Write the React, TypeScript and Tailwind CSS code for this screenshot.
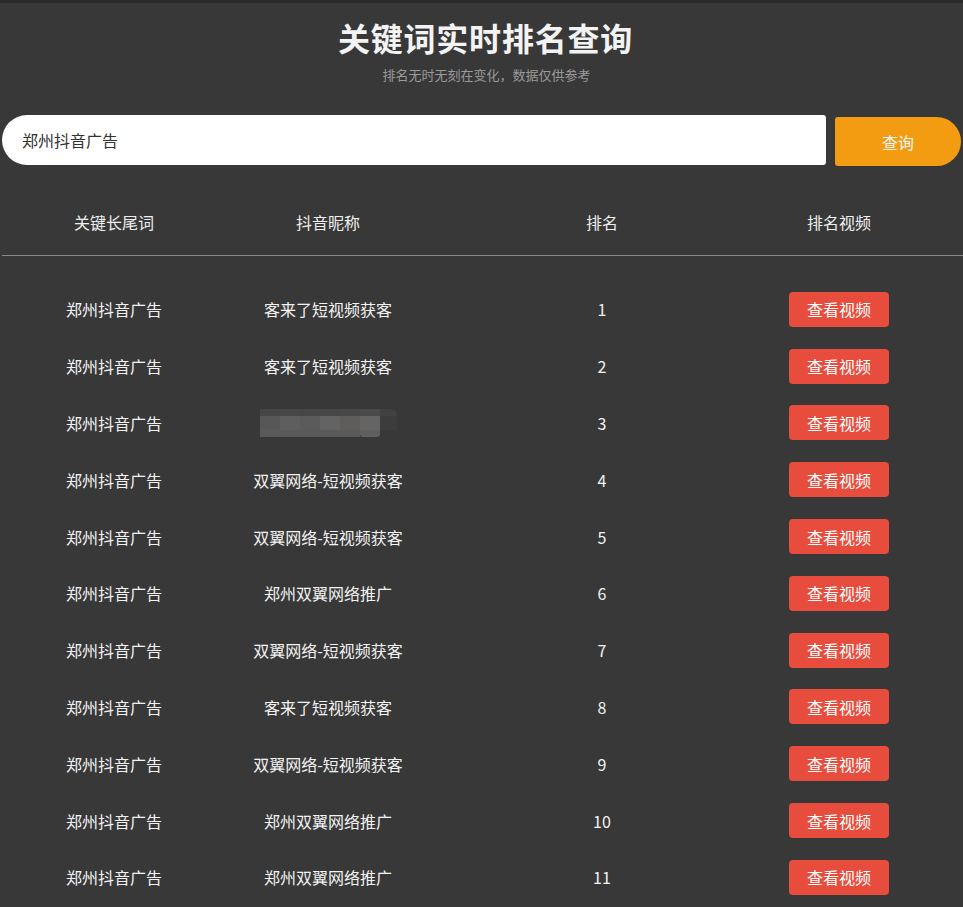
import React from "react";

const rows: { nick: string | null; rank: number }[] = [
  { nick: "客来了短视频获客", rank: 1 },
  { nick: "客来了短视频获客", rank: 2 },
  { nick: null, rank: 3 },
  { nick: "双翼网络-短视频获客", rank: 4 },
  { nick: "双翼网络-短视频获客", rank: 5 },
  { nick: "郑州双翼网络推广", rank: 6 },
  { nick: "双翼网络-短视频获客", rank: 7 },
  { nick: "客来了短视频获客", rank: 8 },
  { nick: "双翼网络-短视频获客", rank: 9 },
  { nick: "郑州双翼网络推广", rank: 10 },
  { nick: "郑州双翼网络推广", rank: 11 },
];

function Blurred() {
  return (
    <div className="flex flex-col w-[137px] h-[28px] blur-[0.6px]">
      <div className="flex h-[7px]">
        <div className="w-[20px] bg-[#454545]" />
        <div className="w-[20px] bg-[#474747]" />
        <div className="w-[20px] bg-[#464646]" />
        <div className="w-[20px] bg-[#474747]" />
        <div className="w-[20px] bg-[#484848]" />
        <div className="w-[20px] bg-[#4a4a4a]" />
        <div className="w-[17px] bg-[#414141] rounded-tr-[6px]" />
      </div>
      <div className="flex h-[14px]">
        <div className="w-[20px] bg-[#575757]" />
        <div className="w-[20px] bg-[#5e5e5e]" />
        <div className="w-[20px] bg-[#5b5b5b]" />
        <div className="w-[20px] bg-[#636363]" />
        <div className="w-[20px] bg-[#5f5c5c]" />
        <div className="w-[20px] bg-[#636463]" />
        <div className="w-[17px] bg-[#3c3c3c]" />
      </div>
      <div className="flex h-[7px]">
        <div className="w-[100px] bg-[#5a5a5a]" />
        <div className="w-[20px] bg-[#5f5f5f] rounded-b-[3px]" />
      </div>
    </div>
  );
}

export default function App() {
  return (
    <div
      className="min-h-screen bg-[#383838] border-t-[3px] border-[#2a2a2a] text-[#f2f2f2]"
      style={{ fontFamily: '"Noto Sans CJK SC", "Noto Sans", sans-serif' }}
    >
      <h1 className="mt-[15px] text-center text-[32px] leading-[38px] font-bold tracking-[0.8px] pl-[8px] text-[#f3f3f3]">
        关键词实时排名查询
      </h1>
      <p className="mt-[10px] text-center text-[13px] leading-[18px] pl-[10px] text-[#9a9a9a]">
        排名无时无刻在变化，数据仅供参考
      </p>

      <div className="mt-[30px] flex items-center pl-[2px] pr-[2px]">
        <div className="w-[824px] h-[50px] bg-white rounded-l-[25px] rounded-r-[3px] flex items-center pl-[20px] text-[16px] text-[#333]">
          郑州抖音广告
        </div>
        <button className="ml-[9px] w-[126px] h-[49px] mt-[3px] bg-[#f39c12] rounded-l-[3px] rounded-r-[25px] text-[16px] text-[#f5f5f5]">
          查询
        </button>
      </div>

      <div className="mt-[23px] grid grid-cols-[228px_200px_348px_126px] h-[66px] items-center text-center text-[16px] text-[#efefef]">
        <div>关键长尾词</div>
        <div>抖音昵称</div>
        <div>排名</div>
        <div>排名视频</div>
      </div>
      <div className="ml-[2px] h-px bg-[#8a8a8a]" />

      <div className="pt-[25px]">
        {rows.map((r) => (
          <div
            key={r.rank}
            className="grid grid-cols-[228px_200px_348px_126px] h-[56.8px] items-center text-center text-[16px] text-[#f2f2f2]"
          >
            <div>郑州抖音广告</div>
            <div className="flex justify-center">
              {r.nick ? <span>{r.nick}</span> : <Blurred />}
            </div>
            <div>{r.rank}</div>
            <div className="flex justify-center">
              <button className="w-[100px] h-[35px] bg-[#e74c3c] rounded-[4px] text-[16px] text-white">
                查看视频
              </button>
            </div>
          </div>
        ))}
      </div>
    </div>
  );
}
